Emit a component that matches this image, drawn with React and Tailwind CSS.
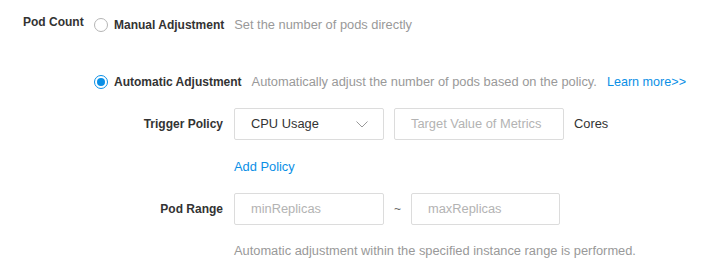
function Radio({ checked }) {
  return checked ? (
    <span className="w-[14px] h-[14px] rounded-full border border-[#0a8fe6] flex items-center justify-center shrink-0">
      <span className="w-[8px] h-[8px] rounded-full bg-[#0a8fe6]" />
    </span>
  ) : (
    <span className="w-[14px] h-[14px] rounded-full border border-[#b5b5b5] bg-white shrink-0" />
  );
}

function Field({ placeholder, w = "w-[150px]" }) {
  return (
    <div className={`${w} h-[32px] border border-[#dcdcdc] rounded-[2px] flex items-center pl-[16px] text-[#b3b3b3] text-[12.85px] shrink-0`}>
      {placeholder}
    </div>
  );
}

export default function App() {
  return (
    <div className="w-[719px] h-[267px] bg-white font-['Liberation_Sans',Arial,sans-serif] text-[12px] leading-[20px] text-[#333]">
      <div className="flex">
        {/* left label */}
        <div className="w-[94px] pl-[23px] pt-[12px] font-bold text-[#333] shrink-0">Pod Count</div>

        <div className="flex-1">
          {/* manual */}
          <div className="flex items-center mt-[15px] h-[20px]">
            <Radio />
            <span className="ml-[6px] font-bold">Manual Adjustment</span>
            <span className="ml-[10px] text-[#999] text-[12.85px]">Set the number of pods directly</span>
          </div>

          {/* automatic */}
          <div className="flex items-center mt-[37px] h-[20px]">
            <Radio checked />
            <span className="ml-[6px] font-bold">Automatic Adjustment</span>
            <span className="ml-[10px] text-[#999] text-[12.85px] whitespace-nowrap">
              Automatically adjust the number of pods based on the policy.
            </span>
            <a className="ml-[10px] text-[#0a8fe6] text-[12.6px] whitespace-nowrap">Learn more&gt;&gt;</a>
          </div>

          {/* trigger policy */}
          <div className="flex items-center mt-[16px]">
            <div className="w-[140px] pr-[11px] text-right font-bold shrink-0">Trigger Policy</div>
            <div className="w-[150px] h-[32px] border border-[#dcdcdc] rounded-[2px] flex items-center justify-between pl-[16px] pr-[15px] text-[#333] text-[12.85px] shrink-0">
              <span>CPU Usage</span>
              <svg width="12" height="7" viewBox="0 0 12 7" fill="none" stroke="#999" strokeWidth="1">
                <path d="M0.5 0.5 L6 6 L11.5 0.5" />
              </svg>
            </div>
            <div className="ml-[10px]">
              <Field placeholder="Target Value of Metrics" w="w-[170px]" />
            </div>
            <span className="ml-[10px] text-[12.85px]">Cores</span>
          </div>

          <div className="pl-[140px] mt-[17px] text-[#0a8fe6] text-[12.85px]">Add Policy</div>

          {/* pod range */}
          <div className="flex items-center mt-[16px]">
            <div className="w-[140px] pr-[11px] text-right font-bold shrink-0">Pod Range</div>
            <Field placeholder="minReplicas" />
            <span className="w-[27px] text-center text-[#666]">~</span>
            <Field placeholder="maxReplicas" w="w-[149px]" />
          </div>

          <div className="pl-[140px] mt-[16px] text-[#999] text-[12.85px] whitespace-nowrap">
            Automatic adjustment within the specified instance range is performed.
          </div>
        </div>
      </div>
    </div>
  );
}
